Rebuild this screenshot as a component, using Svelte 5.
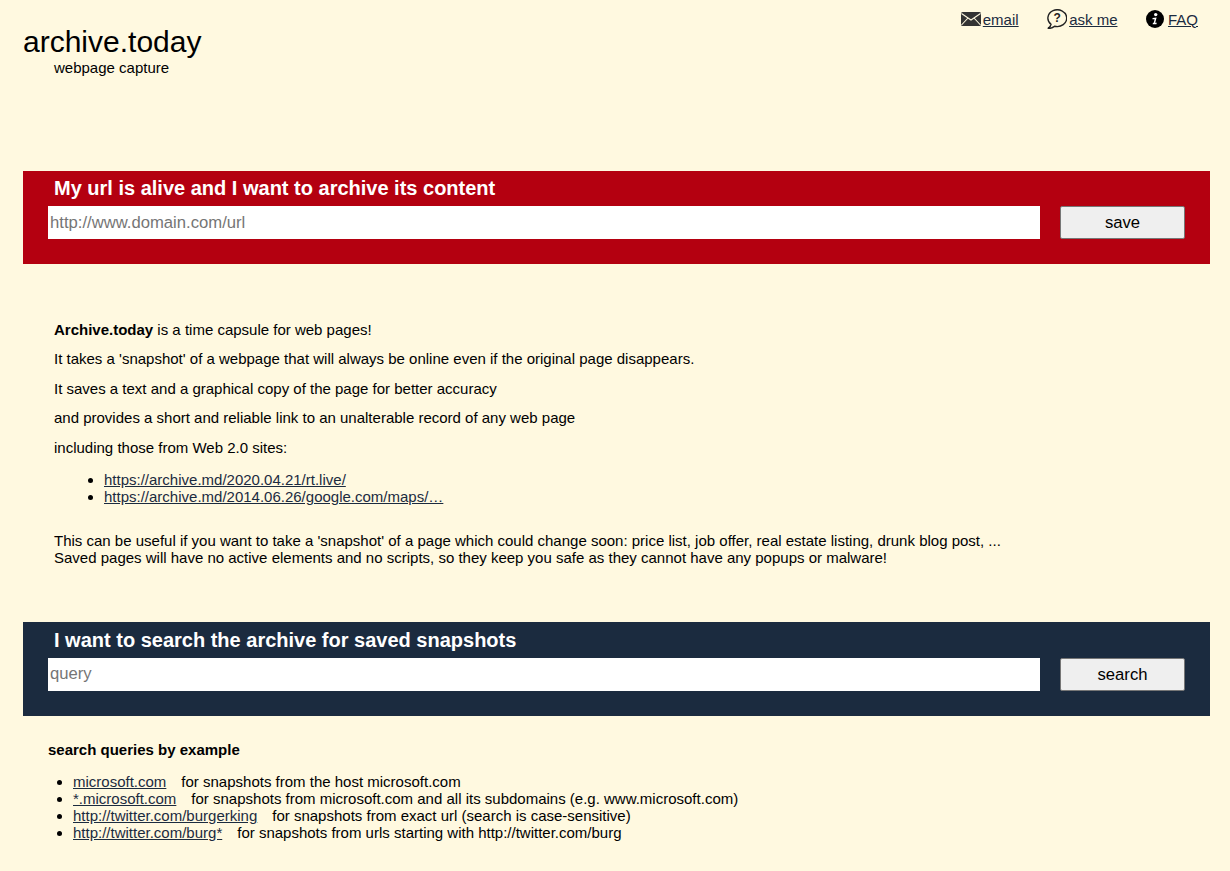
<script>
  const examples = [
    { href: "microsoft.com", note: "for snapshots from the host microsoft.com" },
    { href: "*.microsoft.com", note: "for snapshots from microsoft.com and all its subdomains (e.g. www.microsoft.com)" },
    { href: "http://twitter.com/burgerking", note: "for snapshots from exact url (search is case-sensitive)" },
    { href: "http://twitter.com/burg*", note: "for snapshots from urls starting with http://twitter.com/burg" },
  ];
</script>

<div class="page">
  <header>
    <div class="logo">
      <div class="name">archive.today</div>
      <div class="tagline">webpage capture</div>
    </div>
    <nav>
      <a href="#email" class="nav-item">
        <svg width="20" height="14" viewBox="0 0 20 14">
          <rect width="20" height="14" rx="1.5" fill="#333" />
          <path d="M0.5 1.5 L10 8 L19.5 1.5 M0.5 13 L7 6 M19.5 13 L13 6" fill="none" stroke="#fff9e0" stroke-width="1.1" />
        </svg>
        <span>email</span>
      </a>
      <a href="#ask" class="nav-item">
        <svg width="20" height="20" viewBox="0 0 20 20">
          <path d="M4 15.4 A9.4 8.4 0 1 1 7.6 17.2 Q5 19.4 0.8 19.6 Q3.6 18 4 15.4 Z" fill="none" stroke="#222" stroke-width="1.4" />
          <text x="10.2" y="13.2" font-size="12" font-weight="700" text-anchor="middle" fill="#222" font-family="Liberation Sans">?</text>
        </svg>
        <span>ask me</span>
      </a>
      <a href="#faq" class="nav-item">
        <svg width="18" height="18" viewBox="0 0 18 18">
          <circle cx="9" cy="9" r="9" fill="#000" />
          <circle cx="9.7" cy="4.6" r="1.7" fill="#fff" />
          <path d="M6.6 8 L10.6 7.4 L9.2 12.8 L10.8 12.8 L10.4 14.2 L6.6 14.2 L7 12.8 L7.8 12.8 L8.6 9.2 L6.4 9.3 Z" fill="#fff" />
        </svg>
        <span class="faq">FAQ</span>
      </a>
    </nav>
  </header>

  <section class="panel red">
    <h2>My url is alive and I want to archive its content</h2>
    <form class="row" onsubmit={(e) => e.preventDefault()}>
      <input type="text" placeholder="http://www.domain.com/url" />
      <button type="submit">save</button>
    </form>
  </section>

  <section class="about">
    <p><b>Archive.today</b> is a time capsule for web pages!</p>
    <p>It takes a 'snapshot' of a webpage that will always be online even if the original page disappears.</p>
    <p>It saves a text and a graphical copy of the page for better accuracy</p>
    <p>and provides a short and reliable link to an unalterable record of any web page</p>
    <p>including those from Web 2.0 sites:</p>
    <ul>
      <li><a href="#a">https://archive.md/2020.04.21/rt.live/</a></li>
      <li><a href="#b">https://archive.md/2014.06.26/google.com/maps/…</a></li>
    </ul>
    <div class="useful">
      This can be useful if you want to take a 'snapshot' of a page which could change soon: price list, job offer, real estate listing, drunk blog post, ...<br />
      Saved pages will have no active elements and no scripts, so they keep you safe as they cannot have any popups or malware!
    </div>
  </section>

  <section class="panel navy">
    <h2>I want to search the archive for saved snapshots</h2>
    <form class="row" onsubmit={(e) => e.preventDefault()}>
      <input type="text" placeholder="query" />
      <button type="submit">search</button>
    </form>
  </section>

  <section class="examples">
    <h3>search queries by example</h3>
    <ul>
      {#each examples as ex}
        <li><a href="#q">{ex.href}</a><span class="note">{ex.note}</span></li>
      {/each}
    </ul>
  </section>
</div>

<style>
  :global(body) {
    margin: 0;
    background: #fff9e0;
    color: #000;
    font-family: "Liberation Sans", Arial, sans-serif;
    font-size: 15px;
  }

  a {
    color: #1b2b3f;
  }

  .page {
    padding: 0 20px 0 23px;
    height: 871px;
    box-sizing: border-box;
    overflow: hidden;
  }

  header {
    display: flex;
    justify-content: space-between;
    height: 171px;
  }

  .logo {
    padding-top: 25px;
  }

  .name {
    font-size: 30px;
    line-height: 34px;
  }

  .tagline {
    margin-left: 31px;
    line-height: 18px;
  }

  nav {
    display: flex;
    gap: 28.5px;
    padding: 8px 12px 0 0;
    height: 22px;
  }

  .nav-item {
    display: flex;
    align-items: center;
    gap: 2px;
  }

  .faq {
    margin-left: 2px;
  }

  .panel {
    height: 93px;
    padding: 5px 25px 0;
    box-sizing: border-box;
    color: #fff;
  }

  .red {
    background: #b40010;
  }

  .navy {
    height: 94px;
    padding-top: 6px;
    background: #1b2b3f;
  }

  h2 {
    margin: 0 0 6px 6px;
    font-size: 20px;
    line-height: 24px;
  }

  .row {
    display: flex;
    gap: 20px;
  }

  input {
    flex: 1;
    min-width: 0;
    height: 33px;
    box-sizing: border-box;
    border: 0;
    padding: 0 2px;
    background: #fff;
    font: 16.67px "Liberation Sans", Arial, sans-serif;
  }

  .navy input {
    padding-bottom: 1px;
  }

  input::placeholder {
    color: #757575;
  }

  button {
    width: 125px;
    height: 33px;
    box-sizing: border-box;
    background: #efefef;
    border: 1px solid #767676;
    border-radius: 2px;
    color: #000;
    font: 16.67px "Liberation Sans", Arial, sans-serif;
    padding: 0;
  }

  .about {
    height: 358px;
    padding: 56.6px 0 0 31px;
    box-sizing: border-box;
  }

  .about p {
    margin: 0 0 12.5px;
    line-height: 17px;
  }

  .about ul {
    margin: 15.4px 0 0;
    padding-left: 50px;
    line-height: 17px;
  }

  .useful {
    margin-top: 27px;
    line-height: 17px;
  }

  .examples {
    padding: 25px 0 0 25px;
  }

  h3 {
    margin: 0;
    font-size: 15px;
    line-height: 17px;
  }

  .examples ul {
    margin: 15px 0 0;
    padding-left: 25px;
    line-height: 17px;
  }

  .note {
    margin-left: 15px;
  }
</style>
